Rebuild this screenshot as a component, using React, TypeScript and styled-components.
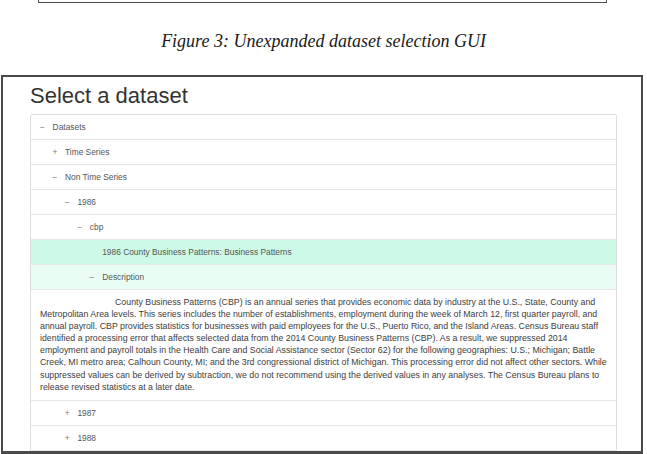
import styled, { createGlobalStyle } from 'styled-components';

const GlobalStyle = createGlobalStyle`
  html, body {
    margin: 0;
    padding: 0;
    background: #ffffff;
    overflow: hidden;
  }
  body {
    font-family: 'Liberation Sans', Arial, sans-serif;
  }
`;

type Node = {
  label: string;
  level: number;
  icon?: 'minus' | 'plus';
  tone?: 'selected' | 'soft';
};

const topRows: Node[] = [
  { label: 'Datasets', level: 0, icon: 'minus' },
  { label: 'Time Series', level: 1, icon: 'plus' },
  { label: 'Non Time Series', level: 1, icon: 'minus' },
  { label: '1986', level: 2, icon: 'minus' },
  { label: 'cbp', level: 3, icon: 'minus' },
  { label: '1986 County Business Patterns: Business Patterns', level: 5, tone: 'selected' },
  { label: 'Description', level: 4, icon: 'minus', tone: 'soft' },
];

const bottomRows: Node[] = [
  { label: '1987', level: 2, icon: 'plus' },
  { label: '1988', level: 2, icon: 'plus' },
];

const description = [
  'County Business Patterns (CBP) is an annual series that provides economic data by industry at the U.S., State, County and',
  'Metropolitan Area levels. This series includes the number of establishments, employment during the week of March 12, first quarter payroll, and',
  'annual payroll. CBP provides statistics for businesses with paid employees for the U.S., Puerto Rico, and the Island Areas. Census Bureau staff',
  'identified a processing error that affects selected data from the 2014 County Business Patterns (CBP). As a result, we suppressed 2014',
  'employment and payroll totals in the Health Care and Social Assistance sector (Sector 62) for the following geographies: U.S.; Michigan; Battle',
  'Creek, MI metro area; Calhoun County, MI; and the 3rd congressional district of Michigan. This processing error did not affect other sectors. While',
  'suppressed values can be derived by subtraction, we do not recommend using the derived values in any analyses. The Census Bureau plans to',
  'release revised statistics at a later date.',
];

const TreeRow = ({ node }: { node: Node }) => (
  <Row $level={node.icon ? node.level : node.level - 1} $tone={node.tone}>
    <Toggle>{node.icon === 'minus' ? '\u2212' : node.icon === 'plus' ? '+' : ''}</Toggle>
    <Label>{node.label}</Label>
  </Row>
);

const App = () => {
  return (
    <Page>
      <GlobalStyle />
      <PrevFigure />
      <Caption>Figure 3: Unexpanded dataset selection GUI</Caption>
      <Figure>
        <Heading>Select a dataset</Heading>
        <Tree>
          {topRows.map((node) => (
            <TreeRow key={node.label} node={node} />
          ))}
          <DescriptionRow>
            {description.map((line, i) => (
              <Line key={i} $first={i === 0}>
                {line}
              </Line>
            ))}
          </DescriptionRow>
          {bottomRows.map((node) => (
            <TreeRow key={node.label} node={node} />
          ))}
        </Tree>
      </Figure>
    </Page>
  );
};

const Page = styled.div`
  width: 647px;
  height: 454px;
  overflow: hidden;
  display: flex;
  flex-direction: column;
`;

const PrevFigure = styled.div`
  margin-left: 38px;
  width: 567px;
  height: 2px;
  border: 1.5px solid #4d4d4d;
  border-top: none;
  flex-shrink: 0;
`;

const Caption = styled.div`
  margin-top: 28px;
  font-family: 'Liberation Serif', 'Times New Roman', serif;
  font-style: italic;
  font-size: 18px;
  line-height: 20px;
  color: #1a1a1a;
  text-align: center;
  flex-shrink: 0;
`;

const Figure = styled.div`
  margin-top: 24px;
  margin-left: 1px;
  width: 642px;
  height: 379px;
  border: 2px solid #4a4a4a;
  border-bottom-width: 3px;
  padding: 0 24px 0 27px;
  box-sizing: border-box;
  overflow: hidden;
  flex-shrink: 0;
  display: flex;
  flex-direction: column;
`;

const Heading = styled.h1`
  margin: 7px 0 6px;
  font-family: 'Liberation Sans', Arial, sans-serif;
  font-weight: 400;
  font-size: 22px;
  line-height: 24px;
  color: #333333;
`;

const Tree = styled.div`
  border: 1px solid #dddddd;
  border-radius: 2px;
  display: flex;
  flex-direction: column;
  flex-shrink: 0;
`;

const Row = styled.div<{ $level: number; $tone?: 'selected' | 'soft' }>`
  display: flex;
  align-items: center;
  height: 24px;
  padding-left: ${(p) => 9 + p.$level * 12.4}px;
  border-bottom: 1px solid #e6e6e6;
  background: ${(p) =>
    p.$tone === 'selected' ? '#cdfae6' : p.$tone === 'soft' ? '#eafdf4' : '#ffffff'};
  font-size: 8.4px;
  color: #555555;
  flex-shrink: 0;
`;

const Toggle = styled.span`
  display: inline-block;
  width: 12.6px;
  color: #777777;
  font-size: 8.4px;
`;

const Label = styled.span`
  white-space: nowrap;
`;

const DescriptionRow = styled.div`
  padding: 6px 9px 7px;
  border-bottom: 1px solid #e6e6e6;
  font-size: 8.8px;
  line-height: 12.1px;
  color: #3d3d3d;
  flex-shrink: 0;
`;

const Line = styled.div<{ $first?: boolean }>`
  white-space: nowrap;
  padding-left: ${(p) => (p.$first ? '75px' : '0')};
`;

export default App;
